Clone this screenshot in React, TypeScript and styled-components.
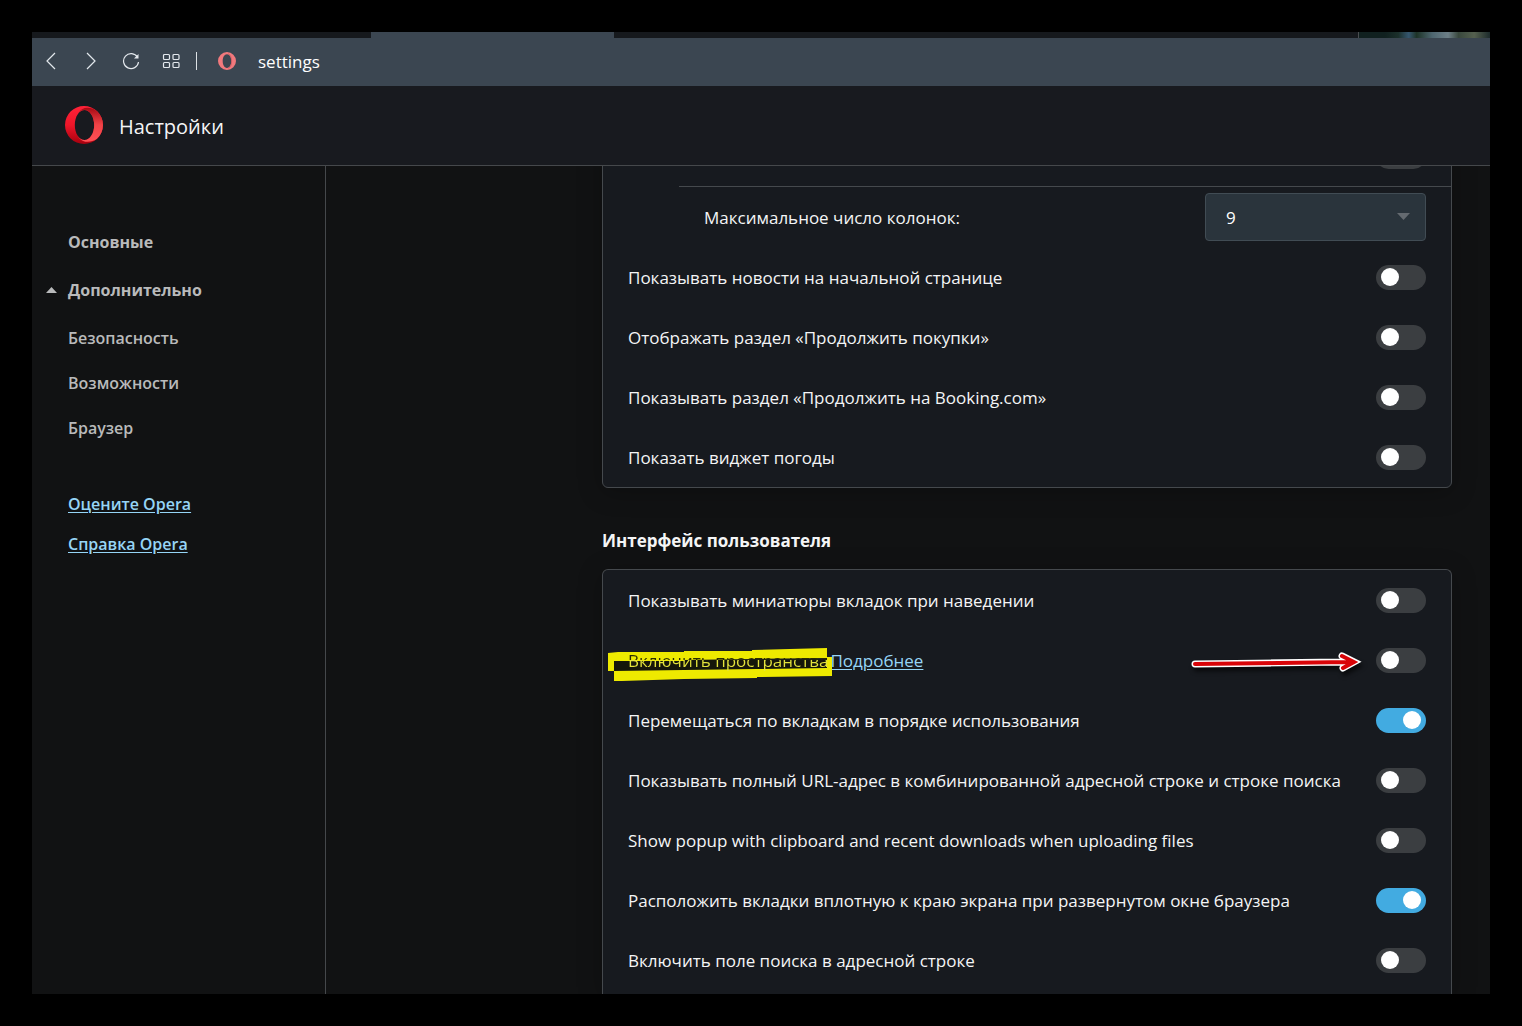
import React, { useId, useState } from "react";
import styled, { createGlobalStyle } from "styled-components";

const GlobalStyle = createGlobalStyle`
  *, *::before, *::after { box-sizing: border-box; }
  body {
    margin: 0;
    background: #000;
    color: #f4f5f6;
    font: 17px/24px "Open Sans", "Noto Sans", sans-serif;
  }
`;

const Desktop = styled.div`
  height: 100vh;
  padding: 32px;
  background: #000;
`;

const BrowserWindow = styled.div`
  display: flex;
  flex-direction: column;
  height: 100%;
  overflow: hidden;
  background: #111213;
`;

const TabStrip = styled.div`
  display: flex;
  flex: none;
  height: 6px;
  background: #16191d;
`;

const ActiveTab = styled.div`
  width: 243px;
  margin-left: 339px;
  background: #3b4651;
`;

const TabThumbnail = styled.div`
  width: 132px;
  margin-left: auto;
  border-left: 1px solid #4a4d50;
  background: linear-gradient(90deg, #10201f 0 20%, #1b2f2a 30%, #35566f 38%, #1d3327 44%, #4e6670 56%, #6d7f87 68%, #39483d 76%, #55604f 88%, #1c2a2b);
`;

const Toolbar = styled.div`
  display: flex;
  flex: none;
  align-items: center;
  gap: 2px;
  height: 48px;
  padding-bottom: 2px;
  background: #3b4651;
`;

const ToolButton = styled.button`
  display: grid;
  place-items: center;
  width: 38px;
  height: 38px;
  padding: 0;
  border: 0;
  background: none;
  color: #e3e8ed;

  svg {
    fill: none;
    stroke: currentColor;
    stroke-width: 1.2;
  }
`;

const Divider = styled.span`
  width: 1px;
  height: 18px;
  margin: 0 19px 0 4px;
  background: #dce1e5;
`;

const Address = styled.input`
  flex: 1;
  margin-left: 20px;
  padding: 2px 0 0;
  border: 0;
  outline: 0;
  background: none;
  color: #fff;
  font: inherit;
`;

const Header = styled.header`
  display: flex;
  flex: none;
  align-items: center;
  gap: 16px;
  height: 80px;
  padding: 0 33px 2px;
  border-bottom: 1px solid #45484b;
  background: #181a1f;
`;

const Title = styled.h1`
  margin: 0;
  padding-top: 4px;
  font-size: 20px;
  line-height: 28px;
  font-weight: 400;
`;

const Body = styled.div`
  display: flex;
  flex: 1;
  min-height: 0;
`;

const Sidebar = styled.nav`
  display: flex;
  flex: none;
  flex-direction: column;
  width: 294px;
  padding-top: 52px;
  border-right: 1px solid #45484b;
`;

const NavLink = styled.a`
  display: flex;
  align-items: center;
  height: 48px;
  padding-left: 36px;
  color: #b9babb;
  font-size: 16px;
  font-weight: 700;
  text-decoration: none;
`;

const SubNav = styled.div`
  display: flex;
  flex-direction: column;
  margin-top: 1px;
`;

const SubNavLink = styled(NavLink)`
  height: 45px;
  font-weight: 600;
`;

const NavToggle = styled.button`
  display: flex;
  align-items: center;
  gap: 11px;
  height: 48px;
  padding: 0 0 0 14px;
  border: 0;
  background: none;
  color: #b9babb;
  font: inherit;
  font-size: 16px;
  font-weight: 700;
`;

const HelpLinks = styled.div`
  display: flex;
  flex-direction: column;
  align-items: flex-start;
  gap: 16px;
  margin-top: 42px;
  padding-left: 36px;
`;

const TextLink = styled.a<{ $strong?: boolean }>`
  color: #96d5f6;
  font-size: ${(p) => (p.$strong ? 16 : 17)}px;
  font-weight: ${(p) => (p.$strong ? 600 : 400)};
  text-underline-offset: 2px;
`;

const Main = styled.main`
  display: flex;
  flex: 1;
  justify-content: flex-end;
  min-width: 0;
  padding-right: 38px;
  overflow: hidden;
`;

const Column = styled.div`
  display: flex;
  flex-direction: column;
  width: 100%;
  max-width: 850px;
`;

const Card = styled.section<{ $scrolled?: boolean; $grow?: boolean }>`
  flex: ${(p) => (p.$grow ? "1 0 auto" : "none")};
  margin-top: ${(p) => (p.$scrolled ? -40 : 0)}px;
  border: 1px solid #45494d;
  border-bottom-width: ${(p) => (p.$grow ? 0 : 1)}px;
  border-radius: ${(p) => (p.$grow ? "6px 6px 0 0" : "6px")};
  background: #171a1f;
  box-shadow: 0 4px 24px rgba(0, 0, 0, 0.25);
`;

const SectionTitle = styled.h2`
  flex: none;
  margin: 41px 0 16px;
  font-size: 17px;
  line-height: 24px;
  font-weight: 700;
`;

const Row = styled.div`
  display: flex;
  align-items: center;
  justify-content: space-between;
  height: 60px;
  padding: 0 25px;
`;

const IndentedRow = styled(Row)<{ $ruled?: boolean }>`
  margin-left: 76px;
  border-bottom: ${(p) => (p.$ruled ? "1px solid #45494d" : "0")};
`;

const RowLabel = styled.label`
  padding-top: 2px;
`;

const RowText = styled.div`
  position: relative;
  display: flex;
  gap: 2px;
  padding-top: 2px;
`;

const Switch = styled.input`
  appearance: none;
  display: flex;
  flex: none;
  align-items: center;
  width: 50px;
  height: 25px;
  margin: 0 0 0 auto;
  padding: 0 5px;
  border-radius: 13px;
  background: #3b3e41;

  &::before {
    content: "";
    width: 18px;
    height: 18px;
    border-radius: 50%;
    background: #fff;
  }

  &:checked {
    justify-content: flex-end;
    background: #42abe1;
  }
`;

const SelectBox = styled.div`
  position: relative;
  width: 221px;

  svg {
    position: absolute;
    top: 20px;
    right: 16px;
    pointer-events: none;
  }
`;

const Select = styled.select`
  appearance: none;
  display: block;
  width: 100%;
  height: 48px;
  padding: 2px 20px 0;
  border: 1px solid #414c54;
  border-radius: 4px;
  background: #2a343c;
  color: #fff;
  font: inherit;
`;

const MarkedLabel = styled.label`
  position: relative;
  background: linear-gradient(#2c2d00 11px, #e3e23c 11px);
  background-clip: text;
  color: transparent;
`;

const Marker = styled.svg`
  position: absolute;
  top: 1px;
  left: -20px;
`;

const ArrowNote = styled.svg`
  flex: none;
  margin: 0 13px 0 auto;
  overflow: visible;
  filter: drop-shadow(2px 4px 2px rgba(0, 0, 0, 0.6));

  & + ${Switch} {
    margin-left: 0;
  }
`;

function OperaMark() {
  return (
    <svg width="38" height="38" viewBox="0 0 38 38" aria-hidden="true">
      <defs>
        <linearGradient id="ring" x1="0" y1="0" x2="0" y2="1">
          <stop offset="0" stopColor="#ff2238" />
          <stop offset="0.5" stopColor="#ee1629" />
          <stop offset="1" stopColor="#a5000e" />
        </linearGradient>
        <linearGradient id="fold" x1="0" y1="0" x2="0" y2="1">
          <stop offset="0" stopColor="#a80a14" />
          <stop offset="0.5" stopColor="#f04347" />
          <stop offset="1" stopColor="#ff5055" />
        </linearGradient>
      </defs>
      <path
        fill="url(#ring)"
        fillRule="evenodd"
        d="M19 0a19 19 0 1 0 0 38 19 19 0 0 0 0-38Zm.5 3.900c5.400 0 9.700 6.700 9.700 15s-4.300 15-9.700 15-9.700-6.700-9.700-15 4.300-15 9.700-15Z"
      />
      <path
        fill="url(#fold)"
        d="M12.700 7.500C15 4.600 17.500 3.900 19.500 3.900c5.400 0 9.700 6.700 9.700 15s-4.300 15-9.700 15c-2.700 0-5-1.500-6.800-4 3 5 7 5.900 9.800 5.900 3.400 0 6.500-.9 9.200-2.700a19 19 0 0 0 0-28.200C28.900 2.700 25.800 1.800 22.500 1.800c-3.800 0-7.300 2-9.800 5.700Z"
      />
    </svg>
  );
}

function SmallOperaMark() {
  return (
    <svg width="18" height="18" viewBox="0 0 18 18" aria-hidden="true">
      <path
        fill="#f1797d"
        fillRule="evenodd"
        d="M9 0a9 9 0 1 0 0 18A9 9 0 0 0 9 0Zm0 2.200c2.700 0 4.300 3 4.300 6.800S11.700 15.900 9 15.900 4.700 12.800 4.700 9 6.300 2.200 9 2.200Z"
      />
      <path d="M10 1.700c4.600 1 5 13.200.3 14.600" fill="none" stroke="#d4595f" strokeWidth="0.8" />
    </svg>
  );
}

type SwitchRowProps = { label: string; on?: boolean };

function SwitchRow({ label, on = false }: SwitchRowProps) {
  const id = useId();
  const [checked, setChecked] = useState(on);
  return (
    <Row>
      <RowLabel htmlFor={id}>{label}</RowLabel>
      <Switch id={id} type="checkbox" checked={checked} onChange={() => setChecked(!checked)} />
    </Row>
  );
}

function WorkspacesRow() {
  return (
    <Row>
      <RowText>
        <Marker width="224" height="33" viewBox="0 0 224 33" aria-hidden="true">
          <path d="M6 12H219V24H6Z" fill="#15160a" />
          <path
            fill="#eeea00"
            fillRule="evenodd"
            d="M0 5 10 4H76V3H144V2L219 0V9H224V28L149 29V30L76 31V31L14 33H6V23H0ZM6 13H76V12L144 11L219 10V20L149 21L76 22L6 23Z"
          />
        </Marker>
        <MarkedLabel htmlFor="workspaces">Включить пространства</MarkedLabel>
        <TextLink href="#workspaces">Подробнее</TextLink>
      </RowText>
      <ArrowNote width="172" height="20" viewBox="0 0 172 20" fill="none" strokeLinecap="round" aria-hidden="true">
        <path d="M4 14 150 12M151 6 163 12 152 18" stroke="#fff" strokeWidth="7" />
        <path d="M4 14 158 12M151 6 163 12 152 18" stroke="#d90408" strokeWidth="4" />
      </ArrowNote>
      <Switch id="workspaces" type="checkbox" />
    </Row>
  );
}

export default function App() {
  return (
    <>
      <GlobalStyle />
      <Desktop>
        <BrowserWindow>
          <TabStrip>
            <ActiveTab />
            <TabThumbnail />
          </TabStrip>
          <Toolbar>
            <ToolButton aria-label="Назад">
              <svg width="18" height="18"><path d="M13 1 5 9l8 8" /></svg>
            </ToolButton>
            <ToolButton aria-label="Вперёд">
              <svg width="18" height="18"><path d="m5 1 8 8-8 8" /></svg>
            </ToolButton>
            <ToolButton aria-label="Обновить">
              <svg width="18" height="18">
                <path d="M15.500 5.200A7.500 7.500 0 1 0 16.500 10" />
                <path d="M16.500 2v4.500H12Z" fill="currentColor" stroke="none" />
              </svg>
            </ToolButton>
            <ToolButton aria-label="Экспресс-панель">
              <svg width="18" height="18">
                <rect x="1.500" y="2.500" width="6" height="5" rx="1" />
                <rect x="11" y="2.500" width="6" height="5" rx="1" />
                <rect x="1.500" y="10.500" width="6" height="5" rx="1" />
                <rect x="11" y="10.500" width="6" height="5" rx="1" />
              </svg>
            </ToolButton>
            <Divider />
            <SmallOperaMark />
            <Address aria-label="Адрес" defaultValue="settings" />
          </Toolbar>
          <Header>
            <OperaMark />
            <Title>Настройки</Title>
          </Header>
          <Body>
            <Sidebar>
              <NavLink href="#basic">Основные</NavLink>
              <NavToggle aria-expanded="true">
                <svg width="11" height="6" aria-hidden="true"><path d="M0 6 5.500 0 11 6Z" fill="#b9babb" /></svg>
                Дополнительно
              </NavToggle>
              <SubNav>
                <SubNavLink href="#security">Безопасность</SubNavLink>
                <SubNavLink href="#features">Возможности</SubNavLink>
                <SubNavLink href="#browser">Браузер</SubNavLink>
              </SubNav>
              <HelpLinks>
                <TextLink $strong href="#rate">Оцените Opera</TextLink>
                <TextLink $strong href="#help">Справка Opera</TextLink>
              </HelpLinks>
            </Sidebar>
            <Main>
              <Column>
                <Card $scrolled>
                  <IndentedRow $ruled>
                    <Switch type="checkbox" aria-label="Начальная страница" />
                  </IndentedRow>
                  <IndentedRow>
                    <RowLabel htmlFor="columns">Максимальное число колонок:</RowLabel>
                    <SelectBox>
                      <Select id="columns" defaultValue="9">
                        <option value="9">9</option>
                      </Select>
                      <svg width="13" height="7" aria-hidden="true"><path d="M0 0h13L6.500 7Z" fill="#646a70" /></svg>
                    </SelectBox>
                  </IndentedRow>
                  <SwitchRow label="Показывать новости на начальной странице" />
                  <SwitchRow label="Отображать раздел «Продолжить покупки»" />
                  <SwitchRow label="Показывать раздел «Продолжить на Booking.com»" />
                  <SwitchRow label="Показать виджет погоды" />
                </Card>
                <SectionTitle>Интерфейс пользователя</SectionTitle>
                <Card $grow>
                  <SwitchRow label="Показывать миниатюры вкладок при наведении" />
                  <WorkspacesRow />
                  <SwitchRow on label="Перемещаться по вкладкам в порядке использования" />
                  <SwitchRow label="Показывать полный URL-адрес в комбинированной адресной строке и строке поиска" />
                  <SwitchRow label="Show popup with clipboard and recent downloads when uploading files" />
                  <SwitchRow on label="Расположить вкладки вплотную к краю экрана при развернутом окне браузера" />
                  <SwitchRow label="Включить поле поиска в адресной строке" />
                </Card>
              </Column>
            </Main>
          </Body>
        </BrowserWindow>
      </Desktop>
    </>
  );
}
